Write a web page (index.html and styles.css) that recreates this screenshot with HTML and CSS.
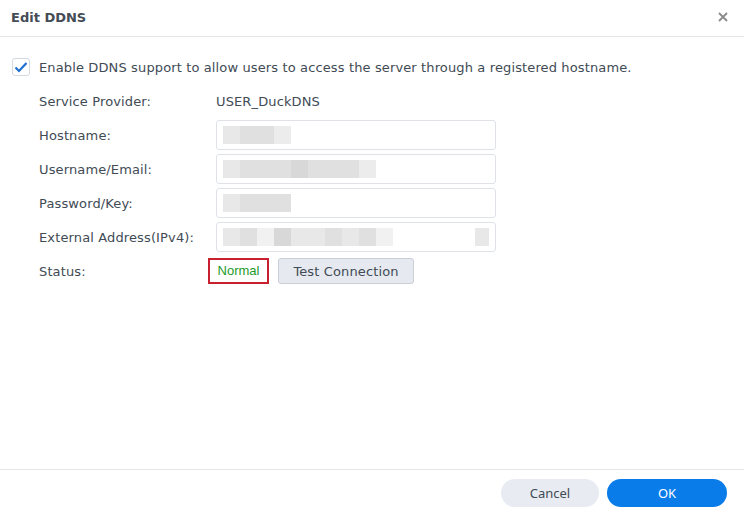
FILE: index.html
```html
<!DOCTYPE html>
<html>
<head>
<meta charset="utf-8">
<link rel="stylesheet" href="styles.css">
</head>
<body>
<div class="dialog">
  <div class="header">
    <div class="title">Edit DDNS</div>
    <svg class="close" width="10" height="10" viewBox="0 0 10 10"><path d="M1 1L9 9M9 1L1 9" stroke="#8a8a8a" stroke-width="1.8"/></svg>
  </div>
  <div class="body">
    <label class="check-row">
      <span class="checkbox"><svg width="14" height="12" viewBox="0 0 14 12"><path d="M1.5 6.5L5 10L12.5 2" fill="none" stroke="#1f6fd1" stroke-width="2.2"/></svg></span>
      <span>Enable DDNS support to allow users to access the server through a registered hostname.</span>
    </label>
    <div class="form">
      <div class="label">Service Provider:</div>
      <div class="value">USER_DuckDNS</div>

      <div class="label">Hostname:</div>
      <div class="input"><span class="blur">
        <i class="b1"></i><i class="b2"></i><i class="b2"></i><i class="b3"></i>
      </span></div>

      <div class="label">Username/Email:</div>
      <div class="input"><span class="blur">
        <i class="b1"></i><i class="b2"></i><i class="b2"></i><i class="b2"></i><i class="b4"></i><i class="b2"></i><i class="b2"></i><i class="b2"></i><i class="b3"></i>
      </span></div>

      <div class="label">Password/Key:</div>
      <div class="input"><span class="blur">
        <i class="b1"></i><i class="b2"></i><i class="b2"></i><i class="b2"></i>
      </span></div>

      <div class="label">External Address(IPv4):</div>
      <div class="input"><span class="blur">
        <i class="b1"></i><i class="b2"></i><i class="b5"></i><i class="b4"></i><i class="b1"></i><i class="b1"></i><i class="b2"></i><i class="b1"></i><i class="b2"></i><i class="b5"></i><i class="gap"></i><i class="b1 last"></i>
      </span></div>

      <div class="label">Status:</div>
      <div class="status-row">
        <span class="status">Normal</span>
        <button class="btn-test">Test Connection</button>
      </div>
    </div>
  </div>
  <div class="footer">
    <button class="btn cancel">Cancel</button>
    <button class="btn ok">OK</button>
  </div>
</div>
</body>
</html>
```

FILE: styles.css
```css
* { box-sizing: border-box; }
html, body {
  margin: 0;
  padding: 0;
  background: #fff;
}
body {
  font-family: "DejaVu Sans", Verdana, sans-serif;
  font-size: 13px;
  letter-spacing: 0.13px;
  color: #414b55;
}
.dialog {
  width: 744px;
  height: 515px;
  display: flex;
  flex-direction: column;
}
.header {
  height: 37px;
  border-bottom: 1px solid #e4e6e9;
  display: flex;
  align-items: center;
  justify-content: space-between;
  padding: 0 16px 2px 11px;
}
.title {
  font-weight: bold;
  font-size: 13px;
  letter-spacing: 0;
  color: #444c55;
}
.body {
  flex: 1;
  padding: 21px 0 0 12px;
}
.check-row {
  display: flex;
  align-items: center;
  gap: 9px;
  height: 18px;
}
.checkbox {
  width: 18px;
  height: 18px;
  border: 1px solid #d4d9e0;
  border-radius: 3px;
  display: flex;
  align-items: center;
  justify-content: center;
}
.form {
  margin-top: 10px;
  padding-left: 27px;
  display: grid;
  grid-template-columns: 177px 280px;
  grid-auto-rows: 30px;
  row-gap: 4px;
  align-items: center;
}
.input {
  height: 30px;
  border: 1px solid #dfe3e8;
  border-radius: 3px;
  padding: 5px 6px;
  display: flex;
  align-items: center;
}
.blur {
  display: flex;
  height: 18px;
  width: 100%;
}
.blur i {
  display: block;
  width: 17px;
  height: 18px;
  background: #e6e6e6;
}
.blur i.b1 { background: #e8e8e8; }
.blur i.b2 { background: #e0e0e0; }
.blur i.b3 { background: #ececec; }
.blur i.b4 { background: #d8d8d8; }
.blur i.b5 { background: #f1f1f1; }
.blur i.gap { flex: 1; background: #fff; }
.blur i.last { width: 14px; }
.status-row {
  display: flex;
  align-items: center;
  gap: 9px;
  margin-left: -8px;
}
.status {
  height: 26px;
  width: 61px;
  border: 2px solid #c8202e;
  color: #1d9a2a;
  font-family: "Liberation Sans", Arial, sans-serif;
  font-size: 13px;
  letter-spacing: 0;
  display: flex;
  align-items: center;
  justify-content: center;
  padding-bottom: 2px;
}
.btn-test {
  height: 26px;
  width: 136px;
  border: 1px solid #c9cfd7;
  border-radius: 3px;
  background: #e6eaf0;
  font-family: "DejaVu Sans", Verdana, sans-serif;
  font-size: 13px;
  letter-spacing: 0.13px;
  color: #414b55;
  padding: 0;
}
.footer {
  height: 46px;
  border-top: 1px solid #e4e6e9;
  display: flex;
  justify-content: flex-end;
  align-items: center;
  gap: 8px;
  padding: 0 17px 0 0;
}
.btn {
  height: 28px;
  border: none;
  border-radius: 14px;
  font-family: "Noto Sans", "Open Sans", sans-serif;
  font-size: 13px;
  letter-spacing: 0;
  padding: 0;
}
.cancel {
  width: 98px;
  background: #e8ecf2;
  color: #414b55;
}
.ok {
  width: 120px;
  background: #0a7ce9;
  color: #fff;
}
```
